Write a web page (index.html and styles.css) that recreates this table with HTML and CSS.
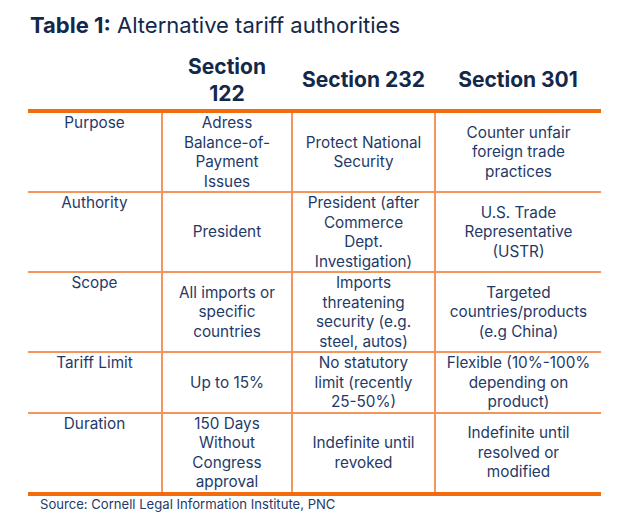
FILE: index.html
```html
<!DOCTYPE html>
<html lang="en">
<head>
<meta charset="utf-8">
<title>Table 1: Alternative tariff authorities</title>
<link rel="stylesheet" href="styles.css">
</head>
<body>
<div class="figure">
  <h1 class="title"><strong>Table 1:</strong> Alternative tariff authorities</h1>
  <table class="tariffs">
    <colgroup>
      <col class="c1"><col class="c2"><col class="c3"><col class="c4">
    </colgroup>
    <thead>
      <tr>
        <th></th>
        <th>Section<br>122</th>
        <th>Section 232</th>
        <th>Section 301</th>
      </tr>
    </thead>
    <tbody>
      <tr>
        <td class="label">Purpose</td>
        <td>Adress<br>Balance-of-<br>Payment<br>Issues</td>
        <td>Protect National<br>Security</td>
        <td>Counter unfair<br>foreign trade<br>practices</td>
      </tr>
      <tr>
        <td class="label">Authority</td>
        <td>President</td>
        <td>President (after<br>Commerce<br>Dept.<br>Investigation)</td>
        <td>U.S. Trade<br>Representative<br>(USTR)</td>
      </tr>
      <tr>
        <td class="label">Scope</td>
        <td>All imports or<br>specific<br>countries</td>
        <td>Imports<br>threatening<br>security (e.g.<br>steel, autos)</td>
        <td>Targeted<br>countries/products<br>(e.g China)</td>
      </tr>
      <tr>
        <td class="label">Tariff Limit</td>
        <td>Up to 15%</td>
        <td>No statutory<br>limit (recently<br>25-50%)</td>
        <td>Flexible (10%-100%<br>depending on<br>product)</td>
      </tr>
      <tr>
        <td class="label">Duration</td>
        <td>150 Days<br>Without<br>Congress<br>approval</td>
        <td>Indefinite until<br>revoked</td>
        <td>Indefinite until<br>resolved or<br>modified</td>
      </tr>
    </tbody>
  </table>
  <p class="source">Source: Cornell Legal Information Institute, PNC</p>
</div>
</body>
</html>
```

FILE: styles.css
```css
html, body {
  margin: 0;
  padding: 0;
  background: #ffffff;
}

body {
  font-family: Inter, "Open Sans", "Liberation Sans", sans-serif;
  color: #1f3a68;
}

.figure {
  padding: 12px 0 0 28px;
}

.title {
  margin: 0 0 12px 2px;
  font-size: 22px;
  line-height: 26px;
  font-weight: 400;
  color: #13284a;
  white-space: nowrap;
}

.title strong {
  font-weight: 700;
}

.tariffs {
  width: 573px;
  table-layout: fixed;
  border-collapse: collapse;
}

.c1 { width: 134px; }
.c2 { width: 130px; }
.c3 { width: 143px; }
.c4 { width: 166px; }

.tariffs th {
  height: 59px;
  padding: 0;
  font-size: 21px;
  line-height: 27px;
  font-weight: 700;
  color: #13284a;
  text-align: center;
  vertical-align: middle;
  border-bottom: 4px solid #f26b0c;
  white-space: nowrap;
}

.tariffs td {
  padding: 0;
  font-size: 15.3px;
  line-height: 19.5px;
  text-align: center;
  vertical-align: middle;
  border: 2px solid #f3965c;
  white-space: nowrap;
}

.tariffs td:first-child {
  border-left: none;
}

.tariffs td:last-child {
  border-right: none;
}

.tariffs td.label {
  vertical-align: top;
}

.tariffs tbody tr:last-child td {
  border-bottom: 4px solid #f26b0c;
}

.source {
  margin: 0 0 0 12px;
  font-size: 13.1px;
  line-height: 16px;
  color: #1f3a68;
  white-space: nowrap;
}
```
